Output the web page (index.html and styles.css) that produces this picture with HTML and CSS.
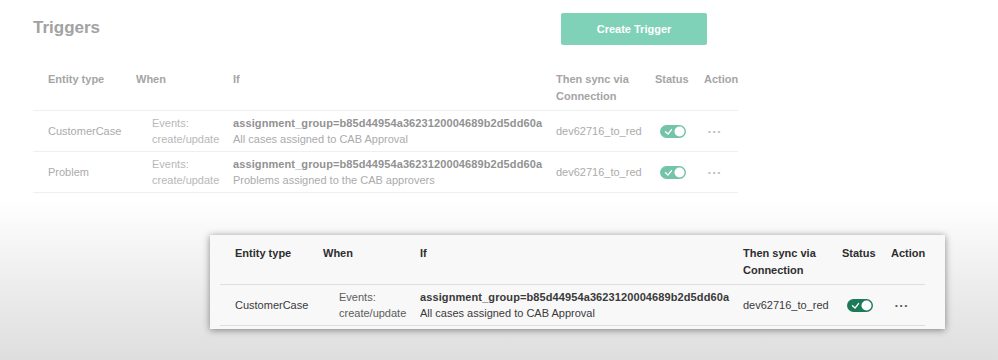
FILE: index.html
```html
<!DOCTYPE html>
<html>
<head>
    <title>Triggers</title>
    <link rel="stylesheet" href="styles.css">
</head>
<body>

    <div class="page faded">
        <div class="top-bar">
            <h2>Triggers</h2>
            <button class="create-btn">Create Trigger</button>
        </div>

        <table class="triggers">
            <tr>
                <th class="c-entity">Entity type</th>
                <th class="c-when">When</th>
                <th class="c-if">If</th>
                <th class="c-sync">Then sync via<br>Connection</th>
                <th class="c-status">Status</th>
                <th class="c-action">Action</th>
            </tr>
            <tr>
                <td class="c-entity">CustomerCase</td>
                <td class="c-when"><div class="events">Events:<br>create/update</div></td>
                <td class="c-if"><b>assignment_group=b85d44954a3623120004689b2d5dd60a</b><br>All cases assigned to CAB Approval</td>
                <td class="c-sync">dev62716_to_red</td>
                <td class="c-status">
                    <svg class="toggle" width="26" height="13" viewBox="0 0 26 13"><rect width="26" height="13" rx="6.5" class="track"/><path d="M5.5 6.8 L8 9.1 L11.5 4.6" fill="none" stroke="#fff" stroke-width="1.4" stroke-linecap="round" stroke-linejoin="round"/><circle cx="19.5" cy="6.5" r="5" fill="#fff"/></svg>
                </td>
                <td class="c-action"><span class="dots">&bull;&bull;&bull;</span></td>
            </tr>
            <tr>
                <td class="c-entity">Problem</td>
                <td class="c-when"><div class="events">Events:<br>create/update</div></td>
                <td class="c-if"><b>assignment_group=b85d44954a3623120004689b2d5dd60a</b><br>Problems assigned to the CAB approvers</td>
                <td class="c-sync">dev62716_to_red</td>
                <td class="c-status">
                    <svg class="toggle" width="26" height="13" viewBox="0 0 26 13"><rect width="26" height="13" rx="6.5" class="track"/><path d="M5.5 6.8 L8 9.1 L11.5 4.6" fill="none" stroke="#fff" stroke-width="1.4" stroke-linecap="round" stroke-linejoin="round"/><circle cx="19.5" cy="6.5" r="5" fill="#fff"/></svg>
                </td>
                <td class="c-action"><span class="dots">&bull;&bull;&bull;</span></td>
            </tr>
        </table>
    </div>

    <div class="zoom">
        <div class="card">
            <table class="triggers">
                <tr>
                    <th class="c-entity">Entity type</th>
                    <th class="c-when">When</th>
                    <th class="c-if">If</th>
                    <th class="c-sync">Then sync via<br>Connection</th>
                    <th class="c-status">Status</th>
                    <th class="c-action">Action</th>
                </tr>
                <tr>
                    <td class="c-entity">CustomerCase</td>
                    <td class="c-when"><div class="events">Events:<br>create/update</div></td>
                    <td class="c-if"><b>assignment_group=b85d44954a3623120004689b2d5dd60a</b><br>All cases assigned to CAB Approval</td>
                    <td class="c-sync">dev62716_to_red</td>
                    <td class="c-status">
                        <svg class="toggle" width="26" height="13" viewBox="0 0 26 13"><rect width="26" height="13" rx="6.5" class="track"/><path d="M5.5 6.8 L8 9.1 L11.5 4.6" fill="none" stroke="#fff" stroke-width="1.4" stroke-linecap="round" stroke-linejoin="round"/><circle cx="19.5" cy="6.5" r="5" fill="#fff"/></svg>
                    </td>
                    <td class="c-action"><span class="dots">&bull;&bull;&bull;</span></td>
                </tr>
            </table>
        </div>
    </div>

</body>
</html>
```

FILE: styles.css
```css
body {
    margin: 0;
    background-color: #fff;
    font-family: "Liberation Sans", Arial, sans-serif;
    font-size: 11px;
}

/* faded page at the top */
.page {
    height: 200px;
    padding: 13px 0 0 33px;
    box-sizing: border-box;
}

.top-bar {
    width: 674px;
    display: flex;
    justify-content: space-between;
    align-items: center;
}

.top-bar h2 {
    margin: 0;
    font-size: 17px;
    color: #a2a2a2;
    padding-bottom: 2px;
}

.create-btn {
    width: 146px;
    height: 32px;
    border: none;
    border-radius: 2px;
    background-color: #7fd1b7;
    color: #fff;
    font-family: inherit;
    font-size: 11px;
    font-weight: bold;
}

.triggers {
    border-collapse: collapse;
    table-layout: fixed;
    width: 705px;
    margin-top: 15px;
}

.triggers th,
.triggers td {
    padding: 0;
    text-align: left;
    border-bottom: 1px solid #efefef;
    vertical-align: middle;
}

.triggers th {
    padding: 11px 0 5px;
    line-height: 17px;
    vertical-align: top;
}

.triggers td {
    padding: 4px 0;
    line-height: 16px;
    height: 32px;
}

.c-entity { width: 88px; padding-left: 15px !important; }
.c-when { width: 97px; }
.c-if { width: 323px; }
.c-sync { width: 99px; }
.c-status { width: 49px; }
.c-action { width: 34px; }

.triggers td b {
    letter-spacing: 0.1px;
}

.events {
    padding-left: 16px;
}

.toggle {
    display: block;
    margin-left: 5px;
}

.dots {
    display: inline-block;
    margin-left: 4px;
    font-size: 8px;
    letter-spacing: 2px;
}

.faded th { color: #a5a5a5; }
.faded td { color: #ababab; }
.faded td b { color: #929292; }
.faded .events { color: #b8b8b8; }
.faded .track { fill: #73c4a8; }
.faded .dots { color: #bbb; }

/* zoomed-in card */
.zoom {
    height: 160px;
    padding-top: 35px;
    box-sizing: border-box;
    background: linear-gradient(to bottom, #fff 0%, #ececec 55%, #dedede 100%);
}

.card {
    width: 735px;
    margin-left: 210px;
    padding: 0 20px 3px 10px;
    box-sizing: border-box;
    background-color: #f8f8f8;
    box-shadow: 0 1px 7px rgba(0, 0, 0, 0.45);
}

.card .triggers {
    margin-top: 0;
}

.card .triggers th {
    padding-top: 10px;
    color: #2e2e2e;
    border-bottom-color: #dedede;
}

.card .triggers td {
    color: #3a3a3a;
    border-bottom-color: #dedede;
}

.card .events { color: #5c5c5c; }
.card .track { fill: #1d7a58; }
.card .dots { color: #555; }
```
